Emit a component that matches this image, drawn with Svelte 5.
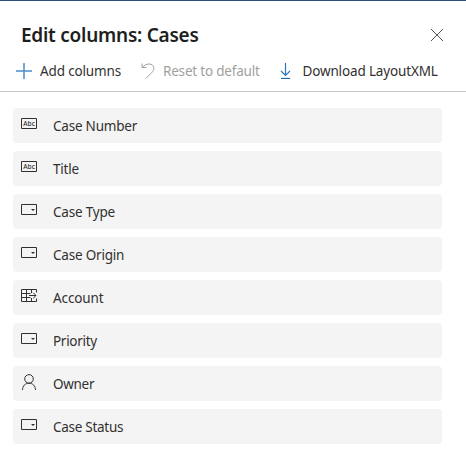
<script>
  const columns = [
    { name: 'Case Number', type: 'text', spacing: -0.22 },
    { name: 'Title', type: 'text', spacing: -0.2 },
    { name: 'Case Type', type: 'choice', spacing: -0.2 },
    { name: 'Case Origin', type: 'choice', spacing: -0.2 },
    { name: 'Account', type: 'lookup', spacing: -0.1 },
    { name: 'Priority', type: 'choice', spacing: -0.3 },
    { name: 'Owner', type: 'owner', spacing: -0.3 },
    { name: 'Case Status', type: 'choice', spacing: -0.28 }
  ];
</script>

<section class="panel">
  <header>
    <h1>Edit columns: Cases</h1>
    <button class="close" aria-label="Close">
      <svg width="14" height="14" viewBox="0 0 14 14"><path d="M1 1L13 13M13 1L1 13" /></svg>
    </button>
  </header>
  <nav>
    <button class="add">
      <svg width="16" height="16" viewBox="0 0 16 16"><path d="M8 0V16M0 8H16" /></svg>
      <span>Add columns</span>
    </button>
    <button class="reset" disabled>
      <svg width="14" height="16" viewBox="0 0 14 16"><path d="M1 0.5V4.5H5.5M1.2 4.3C3 2.5 5.3 1 8 1C11 1 12.8 2.8 12.8 5.2C12.8 7 12 8.3 10.8 9.5L4.8 15.5" /></svg>
      <span>Reset to default</span>
    </button>
    <button class="download">
      <svg width="12" height="16" viewBox="0 0 12 16"><path d="M5.5 0V12M1 8L5.5 12.5L10 8" /><path class="base" d="M1 15.5H10" /></svg>
      <span>Download LayoutXML</span>
    </button>
  </nav>
  <ul>
    {#each columns as column}
      <li>
        <svg class="type" width="18" height="18" viewBox="0 0 18 18">
          {#if column.type === 'text'}
            <path d="M.5 2.5H15.5V12.5H.5Z" />
            <text x="2.3" y="9.9" textLength="11.6" lengthAdjust="spacingAndGlyphs">Abc</text>
          {:else if column.type === 'choice'}
            <path d="M.5 2.5H15.5V12.5H.5Z" />
            <path class="fill" d="M10 7H14L12 9Z" />
          {:else if column.type === 'lookup'}
            <path d="M15.5 4.5V1.5H.5V13.5H15.5V10.5M.5 5.5H9.5M.5 9.5H9.5M5.5 1.5V13.5M10.5 1.5V5M10.5 10V13.5M8 7.5H15M12.2 4.7L15 7.5L12.2 10.3" />
          {:else}
            <path d="M1.5 16C1.5 12 4.2 9.2 8 9.2S14.5 12 14.5 16" />
            <circle cx="8" cy="4.9" r="4.3" />
          {/if}
        </svg>
        <span style="letter-spacing: {column.spacing}px">{column.name}</span>
      </li>
    {/each}
  </ul>
</section>

<style>
  :global(body) { background: #fff; }
  .panel {
    box-sizing: border-box;
    width: 466px;
    height: 453px;
    border-top: 1px solid #2f4d78;
    background: #fff;
    color: #323130;
    font-family: "Noto Sans", "Open Sans", sans-serif;
    font-size: 13.5px;
    overflow: hidden;
  }
  header {
    display: flex;
    justify-content: space-between;
    align-items: center;
    height: 54px;
    padding: 13px 22px 0 21px;
    box-sizing: border-box;
  }
  h1 {
    margin: 0;
    font-size: 19px;
    line-height: 28px;
    font-weight: 600;
    letter-spacing: -0.25px;
    color: #201f1e;
    white-space: nowrap;
  }
  button {
    display: flex;
    align-items: center;
    margin: 0;
    padding: 0;
    border: 0;
    background: none;
    color: inherit;
    font: inherit;
    white-space: nowrap;
  }
  svg { flex: none; display: block; fill: none; stroke: #323130; stroke-width: 1; }
  .close svg { stroke: #55545a; }
  nav {
    display: flex;
    height: 37px;
    box-sizing: border-box;
    padding: 0 0 4px 16px;
    border-bottom: 1px solid #c8c8c8;
  }
  .add { width: 125px; gap: 8px; }
  .add svg { stroke: #4a8cc7; stroke-width: 1.5; }
  .reset { width: 139px; gap: 8px; color: #a19f9d; }
  .reset svg { stroke: #a19f9d; }
  .download { gap: 10.5px; }
  .download svg { stroke: #2b78bd; stroke-width: 1.2; }
  .download .base { stroke: #1765ab; }
  nav span { letter-spacing: -0.15px; }
  .reset span { letter-spacing: -0.2px; }
  ul {
    display: flex;
    flex-direction: column;
    gap: 8px;
    list-style: none;
    margin: 0;
    padding: 16px 24px 0 13px;
  }
  li {
    display: flex;
    align-items: flex-start;
    gap: 14px;
    height: 35px;
    box-sizing: border-box;
    padding: 8px 8px 0;
    border-radius: 4px;
    background: #f4f4f4;
  }
  li span { line-height: 20px; }
  .type text {
    font: 500 6.5px "Noto Sans", sans-serif;
    fill: #323130;
    stroke: none;
  }
  .type .fill { fill: #323130; stroke: none; }
</style>
